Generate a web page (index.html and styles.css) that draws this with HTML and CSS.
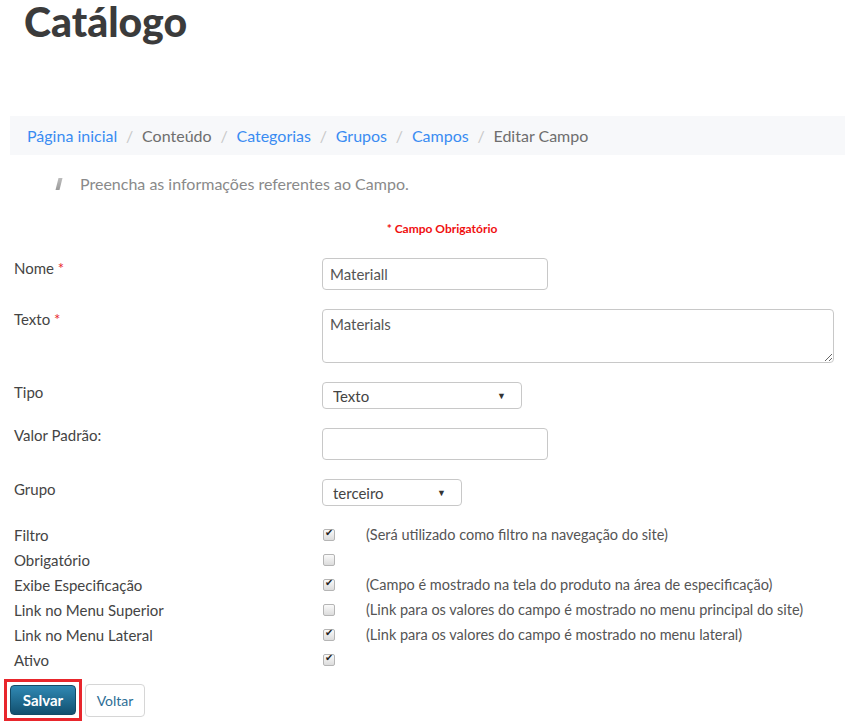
FILE: index.html
```html
<!DOCTYPE html>
<html lang="pt-BR">
<head>
    <meta charset="UTF-8">
    <meta name="viewport" content="width=device-width, initial-scale=1.0">
    <title>Catálogo - Editar Campo</title>
    <link rel="stylesheet" href="styles.css">
</head>
<body>

    <h1 class="page-title">Catálogo</h1>

    <nav class="breadcrumb">
        <a href="#">Página inicial</a>
        <span class="sep">/</span>
        <span class="crumb">Conteúdo</span>
        <span class="sep">/</span>
        <a href="#">Categorias</a>
        <span class="sep">/</span>
        <a href="#">Grupos</a>
        <span class="sep">/</span>
        <a href="#">Campos</a>
        <span class="sep">/</span>
        <span class="crumb">Editar Campo</span>
    </nav>

    <p class="lead"><span class="lead-mark"></span>Preencha as informações referentes ao Campo.</p>

    <form class="form">
        <div class="required-note">* Campo Obrigatório</div>

        <div class="row">
            <label for="nome">Nome <span class="star">*</span></label>
            <input class="field field-md" id="nome" type="text" value="Materiall">
        </div>

        <div class="row">
            <label for="texto">Texto <span class="star">*</span></label>
            <textarea class="field field-lg" id="texto">Materials</textarea>
        </div>

        <div class="row">
            <label for="tipo">Tipo</label>
            <div class="select-wrap select-md">
                <select class="select" id="tipo">
                    <option>Texto</option>
                </select>
            </div>
        </div>

        <div class="row">
            <label class="label-up" for="valor">Valor Padrão:</label>
            <input class="field field-md" id="valor" type="text">
        </div>

        <div class="row">
            <label for="grupo">Grupo</label>
            <div class="select-wrap select-sm">
                <select class="select" id="grupo">
                    <option>terceiro</option>
                </select>
            </div>
        </div>

        <div class="checks">
            <div class="check-row">
                <span class="check-label">Filtro</span>
                <input class="check" type="checkbox" checked>
                <span class="check-help">(Será utilizado como filtro na navegação do site)</span>
            </div>
            <div class="check-row">
                <span class="check-label">Obrigatório</span>
                <input class="check" type="checkbox">
                <span class="check-help"></span>
            </div>
            <div class="check-row">
                <span class="check-label">Exibe Especificação</span>
                <input class="check" type="checkbox" checked>
                <span class="check-help">(Campo é mostrado na tela do produto na área de especificação)</span>
            </div>
            <div class="check-row">
                <span class="check-label">Link no Menu Superior</span>
                <input class="check" type="checkbox">
                <span class="check-help">(Link para os valores do campo é mostrado no menu principal do site)</span>
            </div>
            <div class="check-row">
                <span class="check-label">Link no Menu Lateral</span>
                <input class="check" type="checkbox" checked>
                <span class="check-help">(Link para os valores do campo é mostrado no menu lateral)</span>
            </div>
            <div class="check-row">
                <span class="check-label">Ativo</span>
                <input class="check" type="checkbox" checked>
                <span class="check-help"></span>
            </div>
        </div>

        <div class="actions">
            <span class="save-frame">
                <button class="btn btn-save" type="button">Salvar</button>
            </span>
            <button class="btn btn-back" type="button">Voltar</button>
        </div>
    </form>

</body>
</html>
```

FILE: styles.css
```css
* {
    box-sizing: border-box;
}

body {
    margin: 0;
    background-color: #fff;
    font-family: Lato, "Open Sans", sans-serif;
    color: #444;
}

.page-title {
    margin: 0;
    padding-left: 24px;
    font-size: 41px;
    font-weight: 900;
    line-height: 44px;
    color: #3b3b3b;
}

.breadcrumb {
    display: flex;
    align-items: center;
    gap: 8.8px;
    margin: 72px 3px 0 10px;
    padding: 9px 17px 9px;
    background-color: #f7f8fa;
    font-size: 16px;
    line-height: 21px;
}

.breadcrumb a {
    color: #3a8cf2;
    text-decoration: none;
}

.breadcrumb .sep {
    color: #c8c8c8;
}

.breadcrumb .crumb {
    color: #6e6e6e;
}

.lead {
    display: flex;
    align-items: center;
    margin: 19px 0 0 57px;
    font-size: 16px;
    line-height: 20px;
    color: #8a8a8a;
}

.lead-mark {
    display: inline-block;
    width: 4px;
    height: 12px;
    margin-right: 19px;
    background: linear-gradient(#bdbdbd, #9a9a9a);
    transform: skewX(-14deg);
}

.form {
    padding: 0 14px;
}

.required-note {
    margin: 27px 0 22px 36px;
    text-align: center;
    font-size: 12px;
    font-weight: 700;
    color: #f01010;
}

.row {
    display: grid;
    grid-template-columns: 308px 1fr;
    align-items: start;
    margin-bottom: 19px;
}

.row label {
    font-size: 15px;
    line-height: 20px;
    color: #444;
}

.row .label-up {
    margin-top: -3px;
}

.star {
    color: #e8262c;
}

.field {
    border: 1px solid #c8c8c8;
    border-radius: 4px;
    padding: 0 7px;
    font-family: inherit;
    font-size: 15px;
    color: #555;
    background-color: #fff;
}

.field-md {
    width: 226px;
    height: 32px;
}

.field-lg {
    width: 512px;
    height: 54px;
    padding-top: 5px;
    resize: vertical;
}

.select-wrap {
    position: relative;
    height: 27px;
}

.select-md {
    width: 200px;
}

.select-sm {
    width: 140px;
}

.select-wrap::after {
    content: "\25BC";
    position: absolute;
    right: 16px;
    top: 8px;
    font-size: 9px;
    color: #333;
    pointer-events: none;
}

.select {
    appearance: none;
    width: 100%;
    height: 27px;
    border: 1px solid #c8c8c8;
    border-radius: 4px;
    padding: 0 10px;
    background-color: #fff;
    font-family: inherit;
    font-size: 15px;
    color: #444;
}

.checks {
    margin-top: -3px;
}

.check-row {
    display: grid;
    grid-template-columns: 308px 44px 1fr;
    align-items: center;
    height: 25px;
}

.check-label {
    font-size: 15px;
    color: #444;
}

.check-help {
    font-size: 14.5px;
    color: #555;
}

.check {
    appearance: none;
    position: relative;
    width: 12px;
    height: 12px;
    margin: 1px 0 0 1px;
    border: 1px solid #b5b5b5;
    border-radius: 2px;
    background: linear-gradient(#fafafa, #dcdcdc);
}

.check:checked::after {
    content: "\2714";
    position: absolute;
    left: 1px;
    top: -3px;
    font-size: 10px;
    color: #222;
}

.actions {
    display: flex;
    align-items: center;
    gap: 3px;
    margin: 7px 0 0 -10px;
}

.save-frame {
    display: inline-flex;
    padding: 3px;
    border: 3px solid #e8262c;
}

.btn {
    border-radius: 4px;
    font-family: inherit;
    cursor: pointer;
}

.btn-save {
    width: 66px;
    height: 30px;
    border: 1px solid #134a66;
    background: linear-gradient(#3089b4, #12506f);
    color: #fff;
    font-size: 15px;
    font-weight: 700;
}

.btn-save:active {
    background: #12506f;
}

.btn-back {
    width: 60px;
    height: 33px;
    border: 1px solid #d6d6d6;
    background-color: #fff;
    color: #2e6e96;
    font-size: 14px;
}
```
